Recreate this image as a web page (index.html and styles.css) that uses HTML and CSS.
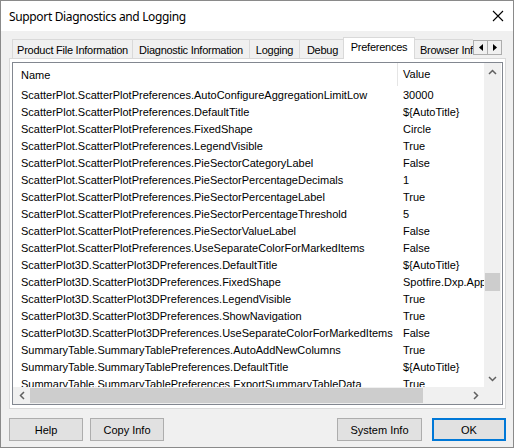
FILE: index.html
```html
<!DOCTYPE html>
<html>
<head>
<meta charset="utf-8">
<link rel="stylesheet" href="styles.css">
</head>
<body>
<div class="window">
  <div class="titlebar">
    <span class="title">Support Diagnostics and Logging</span>
    <svg class="close" width="12" height="12" viewBox="0 0 12 12"><path d="M1 1L11 11M11 1L1 11" stroke="#000" stroke-width="1.1" fill="none"/></svg>
  </div>
  <div class="client">
    <div class="tabcontrol">
      <div class="tabstrip">
        <div class="tabs">
          <div class="tab w-product">Product File Information</div>
          <div class="tab w-diag">Diagnostic Information</div>
          <div class="tab w-log">Logging</div>
          <div class="tab w-debug">Debug</div>
          <div class="tab selected w-pref">Preferences</div>
          <div class="tab w-browser">Browser Information</div>
        </div>
        <div class="tabscroll">
          <div class="sbtn"><svg width="4" height="7" viewBox="0 0 4 7"><path d="M4 0L0 3.5L4 7Z" fill="#000"/></svg></div>
          <div class="sbtn"><svg width="4" height="7" viewBox="0 0 4 7"><path d="M0 0L4 3.5L0 7Z" fill="#000"/></svg></div>
        </div>
      </div>
      <div class="page">
        <div class="listview">
          <div class="content">
            <div class="header">
              <div class="cell name">Name</div>
              <div class="cell value hsep">Value</div>
            </div>
            <div class="row"><div class="cell name">ScatterPlot.ScatterPlotPreferences.AutoConfigureAggregationLimitLow</div><div class="cell value">30000</div></div>
            <div class="row"><div class="cell name">ScatterPlot.ScatterPlotPreferences.DefaultTitle</div><div class="cell value">${AutoTitle}</div></div>
            <div class="row"><div class="cell name">ScatterPlot.ScatterPlotPreferences.FixedShape</div><div class="cell value">Circle</div></div>
            <div class="row"><div class="cell name">ScatterPlot.ScatterPlotPreferences.LegendVisible</div><div class="cell value">True</div></div>
            <div class="row"><div class="cell name">ScatterPlot.ScatterPlotPreferences.PieSectorCategoryLabel</div><div class="cell value">False</div></div>
            <div class="row"><div class="cell name">ScatterPlot.ScatterPlotPreferences.PieSectorPercentageDecimals</div><div class="cell value">1</div></div>
            <div class="row"><div class="cell name">ScatterPlot.ScatterPlotPreferences.PieSectorPercentageLabel</div><div class="cell value">True</div></div>
            <div class="row"><div class="cell name">ScatterPlot.ScatterPlotPreferences.PieSectorPercentageThreshold</div><div class="cell value">5</div></div>
            <div class="row"><div class="cell name">ScatterPlot.ScatterPlotPreferences.PieSectorValueLabel</div><div class="cell value">False</div></div>
            <div class="row"><div class="cell name">ScatterPlot.ScatterPlotPreferences.UseSeparateColorForMarkedItems</div><div class="cell value">False</div></div>
            <div class="row"><div class="cell name">ScatterPlot3D.ScatterPlot3DPreferences.DefaultTitle</div><div class="cell value">${AutoTitle}</div></div>
            <div class="row"><div class="cell name">ScatterPlot3D.ScatterPlot3DPreferences.FixedShape</div><div class="cell value">Spotfire.Dxp.Application.Visuals.MarkerShape</div></div>
            <div class="row"><div class="cell name">ScatterPlot3D.ScatterPlot3DPreferences.LegendVisible</div><div class="cell value">True</div></div>
            <div class="row"><div class="cell name">ScatterPlot3D.ScatterPlot3DPreferences.ShowNavigation</div><div class="cell value">True</div></div>
            <div class="row"><div class="cell name">ScatterPlot3D.ScatterPlot3DPreferences.UseSeparateColorForMarkedItems</div><div class="cell value">False</div></div>
            <div class="row"><div class="cell name">SummaryTable.SummaryTablePreferences.AutoAddNewColumns</div><div class="cell value">True</div></div>
            <div class="row"><div class="cell name">SummaryTable.SummaryTablePreferences.DefaultTitle</div><div class="cell value">${AutoTitle}</div></div>
            <div class="row"><div class="cell name">SummaryTable.SummaryTablePreferences.ExportSummaryTableData</div><div class="cell value">True</div></div>
          </div>
          <div class="vscroll">
            <div class="arrow"><svg width="9" height="6" viewBox="0 0 9 6"><path d="M1 5L4.5 1.5L8 5" stroke="#606060" stroke-width="1.5" fill="none"/></svg></div>
            <div class="vtrack"><div class="vthumb"></div></div>
            <div class="arrow"><svg width="9" height="6" viewBox="0 0 9 6"><path d="M1 1L4.5 4.5L8 1" stroke="#606060" stroke-width="1.5" fill="none"/></svg></div>
          </div>
          <div class="hscroll">
            <div class="arrow"><svg width="6" height="9" viewBox="0 0 6 9"><path d="M5 1L1.5 4.5L5 8" stroke="#606060" stroke-width="1.5" fill="none"/></svg></div>
            <div class="htrack"><div class="hthumb"></div></div>
            <div class="arrow"><svg width="6" height="9" viewBox="0 0 6 9"><path d="M1 1L4.5 4.5L1 8" stroke="#606060" stroke-width="1.5" fill="none"/></svg></div>
          </div>
          <div class="corner"></div>
        </div>
      </div>
    </div>
    <div class="buttons">
      <div class="btn w-help">Help</div>
      <div class="btn w-copy">Copy Info</div>
      <div class="spacer"></div>
      <div class="btn w-sys">System Info</div>
      <div class="btn default w-ok">OK</div>
    </div>
  </div>
</div>
</body>
</html>
```

FILE: styles.css
```css
html, body {
  margin: 0;
  padding: 0;
  background: #5a4a3a;
}
body {
  width: 514px;
  height: 448px;
  overflow: hidden;
  font-family: "Liberation Sans", Arial, sans-serif;
  font-size: 11px;
  color: #000;
}
.window {
  width: 514px;
  height: 448px;
  box-sizing: border-box;
  border: 1px solid #8a8a8a;
  display: flex;
  flex-direction: column;
  background: #f0f0f0;
}
.titlebar {
  height: 30px;
  flex: none;
  background: #fff;
  display: flex;
  align-items: center;
  padding-left: 8px;
  padding-right: 9px;
}
.title {
  flex: 1;
  font-family: "Noto Sans", "Open Sans", sans-serif;
  font-size: 12px;
  letter-spacing: -0.35px;
  color: #000;
}
.close {
  display: block;
}
.client {
  flex: 1;
  display: flex;
  flex-direction: column;
  padding: 6px 7px 0 8px;
}
.tabcontrol {
  display: flex;
  flex-direction: column;
}
.tabstrip {
  height: 21px;
  display: flex;
  align-items: flex-start;
}
.tabs {
  width: 464px;
  height: 22px;
  display: flex;
  align-items: flex-end;
  overflow: hidden;
  padding-left: 3px;
  box-sizing: border-box;
  position: relative;
  z-index: 2;
}
.tab {
  flex: none;
  height: 19px;
  box-sizing: border-box;
  border: 1px solid #d9d9d9;
  border-bottom: none;
  margin-right: -1px;
  margin-bottom: 1px;
  background: #f0f0f0;
  display: flex;
  align-items: center;
  justify-content: center;
  white-space: nowrap;
  overflow: hidden;
  padding-top: 1px;
  letter-spacing: -0.25px;
}
.tab.selected {
  height: 22px;
  background: #fff;
  margin-left: -2px;
  margin-right: -2px;
  margin-bottom: 0;
  position: relative;
  z-index: 3;
  padding-top: 0;
  padding-bottom: 4px;
}
.w-product { width: 121px; }
.w-diag { width: 118px; }
.w-log { width: 51px; }
.w-debug { width: 47px; }
.w-pref { width: 72px; }
.w-browser { width: 100px; justify-content: flex-start; padding-left: 6px; }
.tabscroll {
  display: flex;
  margin-top: 3px;
}
.sbtn {
  width: 15px;
  height: 15px;
  box-sizing: border-box;
  border: 1px solid #adadad;
  background: #f0f0f0;
  display: flex;
  align-items: center;
  justify-content: center;
  margin-right: -1px;
}
.page {
  width: 497px;
  height: 351px;
  box-sizing: border-box;
  border: 1px solid #d9d9d9;
  background: #fff;
  padding: 3px 2px 3px 2px;
  position: relative;
  z-index: 1;
}
.listview {
  width: 491px;
  height: 343px;
  box-sizing: border-box;
  border: 1px solid #828790;
  background: #fff;
  display: grid;
  grid-template-columns: 471px 17px;
  grid-template-rows: 324px 17px;
}
.content {
  overflow: hidden;
  white-space: nowrap;
}
.header {
  height: 23px;
  display: flex;
  align-items: center;
}
.row {
  height: 17px;
  display: flex;
  align-items: center;
}
.cell {
  flex: none;
  overflow: hidden;
  white-space: nowrap;
}
.name {
  width: 376px;
  padding-left: 8px;
}
.value {
  width: 200px;
  padding-left: 6px;
}
.hsep {
  border-left: 1px solid #e5e5e5;
  height: 23px;
  line-height: 23px;
  padding-left: 5px;
}
.vscroll {
  background: #f0f0f0;
  display: flex;
  flex-direction: column;
}
.arrow {
  width: 17px;
  height: 17px;
  flex: none;
  display: flex;
  align-items: center;
  justify-content: center;
}
.vtrack {
  flex: 1;
  padding: 0 1px;
}
.vthumb {
  margin-top: 193px;
  height: 18px;
  background: #cdcdcd;
}
.hscroll {
  background: #f0f0f0;
  display: flex;
}
.htrack {
  flex: 1;
  padding: 1px 0;
}
.hthumb {
  width: 393px;
  height: 15px;
  background: #cdcdcd;
}
.corner {
  background: #f0f0f0;
}
.buttons {
  display: flex;
  margin-top: 9px;
}
.btn {
  height: 23px;
  box-sizing: border-box;
  border: 1px solid #adadad;
  background: #e1e1e1;
  display: flex;
  align-items: center;
  justify-content: center;
}
.btn.default {
  border: 2px solid #0078d7;
}
.w-help { width: 74px; margin-right: 7px; }
.w-copy { width: 74px; }
.spacer { flex: 1; }
.w-sys { width: 85px; margin-right: 10px; }
.w-ok { width: 74px; }
```
